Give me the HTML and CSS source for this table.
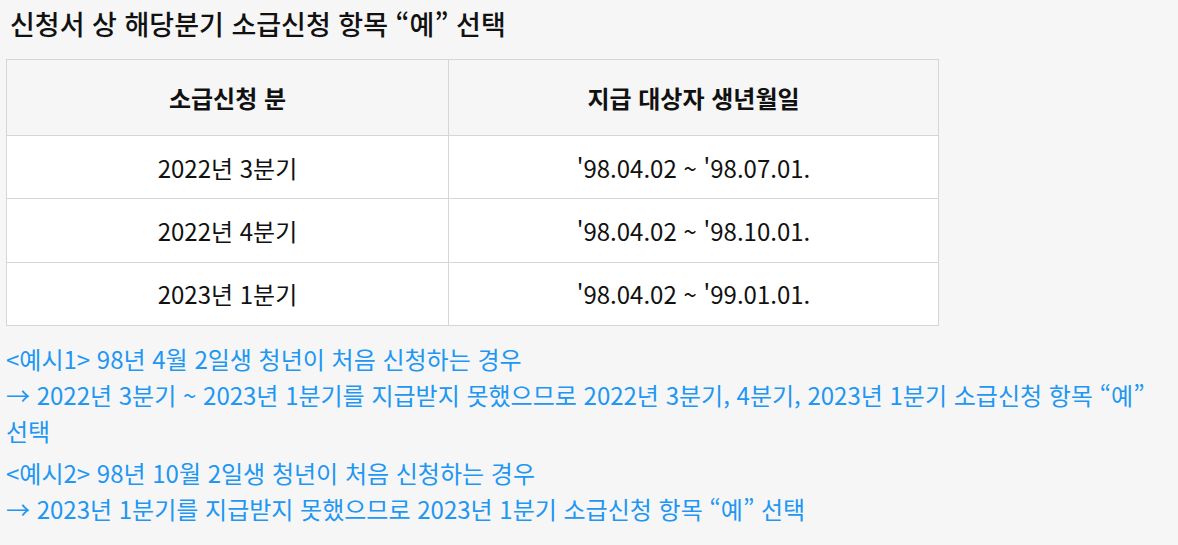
FILE: index.html
```html
<!DOCTYPE html>
<html lang="ko">
<head>
<meta charset="utf-8">
<link rel="stylesheet" href="styles.css">
</head>
<body>
<h3 class="title">신청서 상 해당분기 소급신청 항목 “예” 선택</h3>
<table class="tbl">
  <thead>
    <tr><th class="c1">소급신청 분</th><th class="c2">지급 대상자 생년월일</th></tr>
  </thead>
  <tbody>
    <tr><td>2022년 3분기</td><td>'98.04.02 ~ '98.07.01.</td></tr>
    <tr><td>2022년 4분기</td><td>'98.04.02 ~ '98.10.01.</td></tr>
    <tr><td>2023년 1분기</td><td>'98.04.02 ~ '99.01.01.</td></tr>
  </tbody>
</table>
<p class="ex">&lt;예시1&gt; 98년 4월 2일생 청년이 처음 신청하는 경우<br>→ 2022년 3분기 ~ 2023년 1분기를 지급받지 못했으므로 2022년 3분기, 4분기, 2023년 1분기 소급신청 항목 “예” 선택</p>
<p class="ex">&lt;예시2&gt; 98년 10월 2일생 청년이 처음 신청하는 경우<br>→ 2023년 1분기를 지급받지 못했으므로 2023년 1분기 소급신청 항목 “예” 선택</p>
</body>
</html>
```
FILE: styles.css
```css
html, body {
  margin: 0;
  padding: 0;
  background: #f6f6f6;
}
body {
  padding: 0 6px;
  font-family: "Noto Sans CJK KR", "Noto Sans", sans-serif;
  color: #111;
}
.title {
  margin: 0;
  padding: 4px 4px 0;
  font-size: 27px;
  line-height: 40px;
  font-weight: 500;
  color: #111;
}
.tbl {
  margin-top: 15px;
  border-collapse: collapse;
  width: 933px;
  font-size: 24px;
}
.tbl th, .tbl td {
  border: 1px solid #d6d6d6;
  text-align: center;
  padding: 0;
}
.tbl th {
  height: 75px;
  background: #f6f6f6;
  font-weight: 700;
}
.tbl td {
  height: 62.4px;
  background: #fff;
  font-weight: 400;
}
.c1 { width: 441px; }
.ex {
  margin: 15px 0 0;
  color: #2196f3;
  font-size: 24px;
  line-height: 36px;
}
.ex + .ex { margin-top: 6px; }
```
